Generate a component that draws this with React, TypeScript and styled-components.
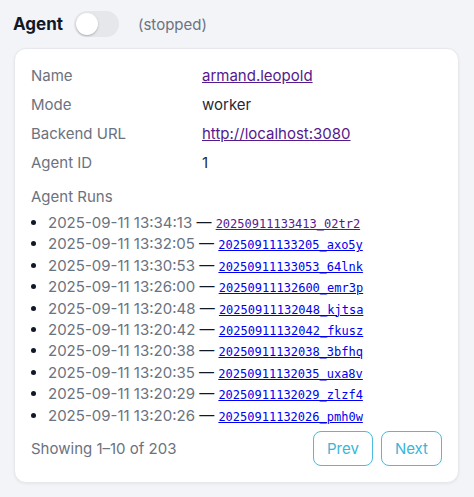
import React from "react";
import styled, { createGlobalStyle } from "styled-components";

const GlobalStyle = createGlobalStyle`
  html, body {
    margin: 0;
    padding: 0;
    background: #f3f4f7;
  }
  body {
    font-family: Inter, "Noto Sans", sans-serif;
    color: #374151;
  }
`;

const Page = styled.div`
  padding: 11px 15px 14px 14px;
`;

const Header = styled.div`
  display: flex;
  align-items: center;
  height: 26px;
`;

const Title = styled.h2`
  margin: 0 0 0 -1px;
  font-size: 17px;
  font-weight: 700;
  color: #111827;
`;

const Toggle = styled.button<{ on: boolean }>`
  position: relative;
  width: 45px;
  height: 26px;
  margin-left: 11px;
  border: none;
  border-radius: 13px;
  background: ${({ on }) => (on ? "#22c55e" : "#e5e7eb")};
  padding: 0;
  cursor: pointer;

  &::after {
    content: "";
    position: absolute;
    top: 2px;
    left: ${({ on }) => (on ? "21px" : "2px")};
    width: 22px;
    height: 22px;
    border-radius: 50%;
    background: #fff;
    box-shadow: 0 1px 2px rgba(0, 0, 0, 0.25);
  }
`;

const Status = styled.span`
  margin-left: 19px;
  font-size: 15px;
  color: #6b7280;
`;

const Card = styled.div`
  margin-top: 11px;
  background: #fff;
  border: 1px solid #e6e8ec;
  border-radius: 12px;
  box-shadow: 0 1px 3px rgba(16, 24, 40, 0.06);
  padding: 16px;
`;

const InfoGrid = styled.dl`
  display: grid;
  grid-template-columns: 171px 1fr;
  row-gap: 7px;
  margin: 0;
  font-size: 15px;
  line-height: 22px;
`;

const Label = styled.dt`
  color: #6b7280;
`;

const Value = styled.dd`
  margin: 0;
  color: #1f2937;
`;

const Link = styled.a`
  color: #551a8b;
  text-decoration: underline;
`;

const SectionTitle = styled.div`
  margin-top: 12px;
  font-size: 15px;
  line-height: 22px;
  color: #6b7280;
`;

const RunList = styled.ul`
  margin: 4px 0 0;
  padding-left: 17px;
  font-size: 15px;
  color: #111827;
`;

const RunItem = styled.li`
  height: 21.4px;
  line-height: 21.4px;
`;

const RunTime = styled.span`
  color: #6b7280;
`;

const RunLink = styled.a<{ visited?: boolean }>`
  font-family: "DejaVu Sans Mono", monospace;
  font-size: 12px;
  line-height: 1;
  color: ${({ visited }) => (visited ? "#551a8b" : "#0000ee")};
  text-decoration: underline;
`;

const Footer = styled.div`
  display: flex;
  align-items: center;
  justify-content: space-between;
  margin-top: 5px;
`;

const Summary = styled.span`
  font-size: 15px;
  color: #6b7280;
`;

const Buttons = styled.div`
  display: flex;
  gap: 8px;
`;

const PageButton = styled.button`
  height: 35px;
  padding: 0 13px;
  font-family: inherit;
  font-size: 15px;
  color: #38b6d8;
  background: #fff;
  border: 1px solid #4bbcdb;
  border-radius: 8px;
  cursor: pointer;
`;

const runs = [
  ["2025-09-11 13:34:13", "20250911133413_02tr2"],
  ["2025-09-11 13:32:05", "20250911133205_axo5y"],
  ["2025-09-11 13:30:53", "20250911133053_64lnk"],
  ["2025-09-11 13:26:00", "20250911132600_emr3p"],
  ["2025-09-11 13:20:48", "20250911132048_kjtsa"],
  ["2025-09-11 13:20:42", "20250911132042_fkusz"],
  ["2025-09-11 13:20:38", "20250911132038_3bfhq"],
  ["2025-09-11 13:20:35", "20250911132035_uxa8v"],
  ["2025-09-11 13:20:29", "20250911132029_zlzf4"],
  ["2025-09-11 13:20:26", "20250911132026_pmh0w"],
];

export default function App() {
  return (
    <Page>
      <GlobalStyle />
      <Header>
        <Title>Agent</Title>
        <Toggle on={false} aria-label="Toggle agent" />
        <Status>(stopped)</Status>
      </Header>
      <Card>
        <InfoGrid>
          <Label>Name</Label>
          <Value>
            <Link href="#">armand.leopold</Link>
          </Value>
          <Label>Mode</Label>
          <Value>worker</Value>
          <Label>Backend URL</Label>
          <Value>
            <Link href="#">http://localhost:3080</Link>
          </Value>
          <Label>Agent ID</Label>
          <Value>1</Value>
        </InfoGrid>
        <SectionTitle>Agent Runs</SectionTitle>
        <RunList>
          {runs.map(([time, id], i) => (
            <RunItem key={id}>
              <RunTime>{time}</RunTime> — <RunLink href="#" visited={i === 0}>{id}</RunLink>
            </RunItem>
          ))}
        </RunList>
        <Footer>
          <Summary>Showing 1–10 of 203</Summary>
          <Buttons>
            <PageButton>Prev</PageButton>
            <PageButton>Next</PageButton>
          </Buttons>
        </Footer>
      </Card>
    </Page>
  );
}
